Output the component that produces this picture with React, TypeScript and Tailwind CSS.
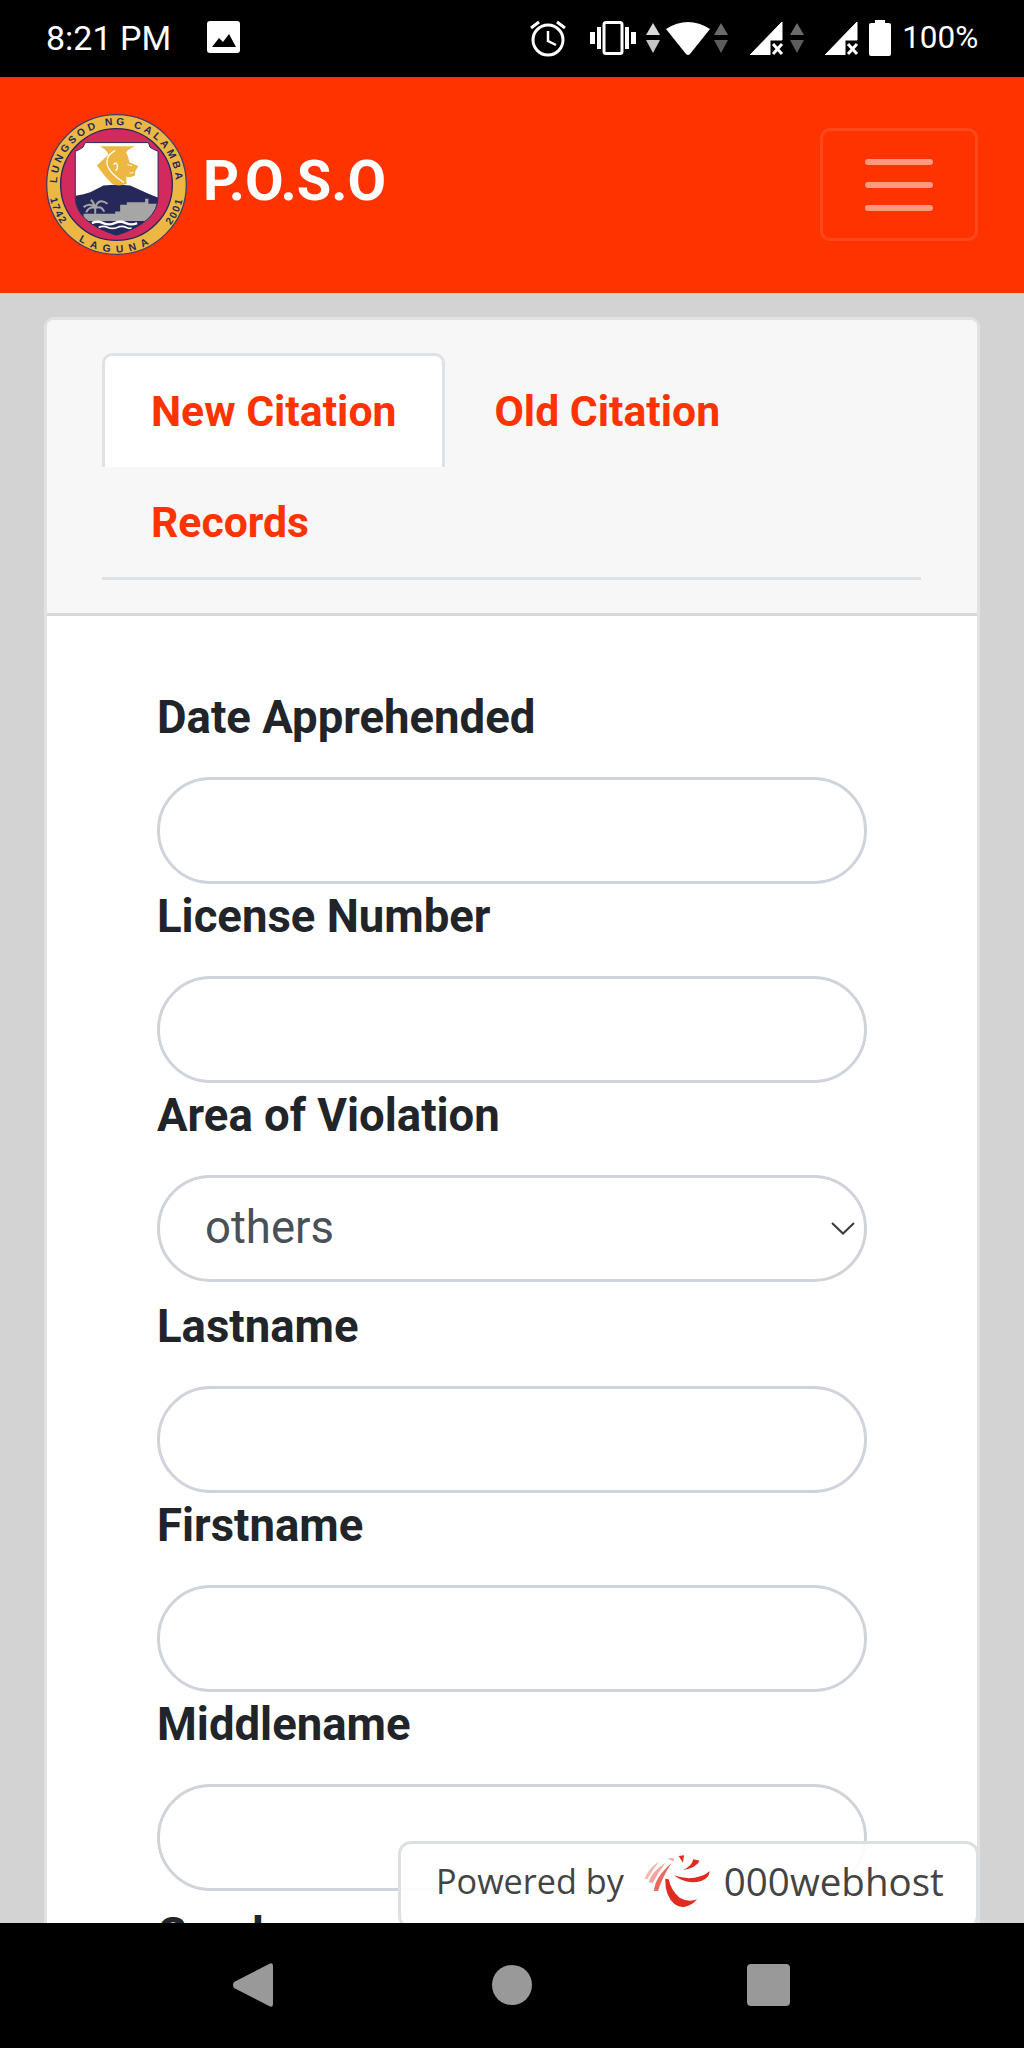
const sans = "font-['Roboto','Liberation_Sans',sans-serif]";

const fields = [
  { label: "Date Apprehended" },
  { label: "License Number" },
  { label: "Area of Violation", select: true },
  { label: "Lastname" },
  { label: "Firstname" },
  { label: "Middlename" },
];

function UpDown({ dim = false }: { dim?: boolean }) {
  return (
    <svg width="14" height="30" viewBox="0 0 14 30" className="shrink-0">
      <path d="M7 0 L14 12 H0 Z" fill={dim ? "#6b6b6b" : "#d9d9d9"} />
      <path d="M0 17 H14 L7 30 Z" fill={dim ? "#5c5c5c" : "#c4c4c4"} />
    </svg>
  );
}

function Signal() {
  return (
    <svg width="34" height="34" viewBox="0 0 34 34" className="shrink-0">
      <path d="M0 34 L32 1 V19 H20 V34 Z" fill="#fff" stroke="#fff" strokeWidth="1" strokeLinejoin="round" />
      <path d="M23 23 L32 33 M32 23 L23 33" stroke="#fff" strokeWidth="3" />
    </svg>
  );
}

function StatusBar() {
  return (
    <div className={`flex h-[77px] shrink-0 items-center bg-black pb-[2px] pl-[46px] text-white ${sans}`}>
      <span className="text-[34px] leading-none">8:21 PM</span>
      <svg width="33" height="33" viewBox="0 0 33 33" className="ml-[36px] shrink-0">
        <rect width="33" height="32" rx="3" fill="#fff" />
        <path d="M5 26 L12 17 L16 21 L22 13 L29 26 Z" fill="#000" />
      </svg>
      <svg width="38" height="38" viewBox="0 0 38 38" className="ml-[289px] shrink-0" fill="none" stroke="#fff">
        <circle cx="19" cy="21" r="15" strokeWidth="3" />
        <path d="M19 12 V22 L27 26" strokeWidth="2.5" />
        <path d="M2 9 L10 3 M36 9 L28 3" strokeWidth="3" />
      </svg>
      <svg width="46" height="34" viewBox="0 0 46 34" className="ml-[23px] shrink-0" fill="#fff">
        <rect x="14" y="1.5" width="18" height="31" rx="2" fill="none" stroke="#fff" strokeWidth="3" />
        <rect x="7" y="6" width="4" height="22" />
        <rect x="0" y="11" width="5" height="12" />
        <rect x="35" y="6" width="4" height="22" />
        <rect x="41" y="11" width="5" height="12" />
      </svg>
      <span className="ml-[10px]"><UpDown /></span>
      <svg width="44" height="34" viewBox="0 0 44 34" className="ml-[6px] shrink-0">
        <path d="M0 8 Q22 -6 44 8 L24 33 Q22 35 20 33 Z" fill="#fff" />
      </svg>
      <span className="ml-[4px]"><UpDown dim /></span>
      <span className="ml-[22px]"><Signal /></span>
      <span className="ml-[6px]"><UpDown dim /></span>
      <span className="ml-[21px]"><Signal /></span>
      <svg width="22" height="36" viewBox="0 0 22 36" className="ml-[10px] shrink-0">
        <path d="M6 0 H16 V3 H20 Q22 3 22 5 V34 Q22 36 20 36 H2 Q0 36 0 34 V5 Q0 3 2 3 H6 Z" fill="#fff" />
      </svg>
      <span className="ml-[11px] text-[31.5px] leading-none">100%</span>
    </div>
  );
}

function CityLogo() {
  const shield = "M165 131 H355 L360 145 Q370 152 384 157 V295 Q384 370 259 410 Q135 370 135 295 V157 Q150 152 158 145 Z";
  const sealFont = "'Liberation Sans',sans-serif";
  return (
    <svg width="143" height="143" viewBox="44 42 430 430" className="shrink-0">
      <defs>
        <path id="sealTop" d="M259 436 A179 179 0 1 1 259 78 A179 179 0 1 1 259 436" />
        <path id="sealBottom" d="M259 53 A204 204 0 1 0 259 461 A204 204 0 1 0 259 53" />
        <clipPath id="shieldClip">
          <path d={shield} />
        </clipPath>
      </defs>
      <circle cx="259" cy="257" r="210" fill="#ecb843" stroke="#3f3f6b" strokeWidth="4" />
      <circle cx="259" cy="257" r="168" fill="#d22a5c" stroke="#26285a" strokeWidth="4" />
      <path d={shield} fill="#fff" />
      <g clipPath="url(#shieldClip)">
        <g transform="translate(120 105)">
          <path d="M0 190 L20 185 Q40 182 60 175 L100 155 Q140 150 180 155 L235 180 L280 198 V320 H0 Z" fill="#26285a" />
          <path d="M40 240 H135 V233 H150 V213 H170 V205 H225 V195 H235 V210 H280 V262 H40 Z" fill="#a6a6a6" />
          <path d="M75 240 V222 M75 222 Q60 205 40 220 M75 222 Q55 218 48 236 M75 222 Q85 190 112 210 M75 222 Q95 215 102 234 M75 222 Q70 205 62 198" stroke="#a6a6a6" strokeWidth="6" fill="none" />
          <path d="M65 268 q17 -8 34 0 t34 0 t34 0 t34 0" stroke="#fff" strokeWidth="7" fill="none" />
          <path d="M85 281 q14 -6 28 0 t28 0 t28 0 t14 0" stroke="#fff" strokeWidth="5" fill="none" />
          <path d="M90 37 H195 Q175 45 168 55 Q176 70 178 85 L205 97 L196 110 L194 125 Q180 133 168 128 L170 150 Q145 160 125 150 L100 122 L80 95 L115 62 Q110 48 90 37 Z" fill="#ecb843" />
          <path d="M135 50 Q110 62 110 85 Q112 115 162 146" stroke="#fff" strokeWidth="4" fill="none" />
          <path d="M130 92 Q140 82 142 98 Q142 108 136 110" stroke="#fff" strokeWidth="4" fill="none" />
          <path d="M172 92 L186 96 M178 118 L190 116" stroke="#fff" strokeWidth="3" fill="none" />
        </g>
      </g>
      <path d={shield} fill="none" stroke="#26285a" strokeWidth="3" />
      <g fill="#26285a" fontFamily={sealFont} fontWeight="700" fontSize="31" textAnchor="middle">
        <text letterSpacing="10">
          <textPath href="#sealTop" startOffset="50%">LUNGSOD NG CALAMBA</textPath>
        </text>
        <text letterSpacing="5">
          <textPath href="#sealBottom" startOffset="31.8%">1742</textPath>
        </text>
        <text letterSpacing="18">
          <textPath href="#sealBottom" startOffset="50%">LAGUNA</textPath>
        </text>
        <text letterSpacing="5">
          <textPath href="#sealBottom" startOffset="68.2%">2001</textPath>
        </text>
      </g>
    </svg>
  );
}

function Navbar() {
  return (
    <div className={`flex h-[216px] shrink-0 items-center bg-[#ff3300] pb-[1px] pl-[45px] pr-[46px] ${sans}`}>
      <CityLogo />
      <span className="mb-[8px] ml-[15px] text-[56px] font-bold leading-none text-white">P.O.S.O</span>
      <button className="ml-auto flex h-[113px] w-[158px] flex-col items-center justify-center gap-[17px] rounded-[10px] border-[3px] border-white/10">
        <span className="h-[6px] w-[68px] rounded-full bg-white/50" />
        <span className="h-[6px] w-[68px] rounded-full bg-white/50" />
        <span className="h-[6px] w-[68px] rounded-full bg-white/50" />
      </button>
    </div>
  );
}

function Tabs() {
  return (
    <div className="border-b-[3px] border-[#d8d8d8] bg-[#f7f7f7] pb-[33px] pl-[55px] pr-[56px] pt-[33px]">
      <div className="flex flex-wrap border-b-[3px] border-[#dee2e6] text-[42.7px] font-bold leading-[54px] text-[#ff3300]">
        <div className="rounded-t-[10px] border-[3px] border-b-0 border-[#dee2e6] bg-white px-[46px] pb-[29px] pt-[28px]">New Citation</div>
        <div className="border-[3px] border-b-0 border-transparent px-[46px] pb-[29px] pt-[28px]">Old Citation</div>
        <div className="w-full px-[49px] pb-[28px] pt-[28px]">Records</div>
      </div>
    </div>
  );
}

function Field({ label, select }: { label: string; select?: boolean }) {
  const box = "h-[107px] w-full rounded-full border-[3px] border-[#ced4da] bg-white";
  return (
    <div className={select ? "mb-[12px]" : ""}>
      <label className="mb-[26px] block text-[45.5px] font-bold leading-[66px] text-[#212529]">{label}</label>
      {select ? (
        <div className="relative">
          <select
            defaultValue="others"
            className={`${box} appearance-none pl-[45px] text-[45.5px] text-[#495057] ${sans}`}
          >
            <option value="others">others</option>
          </select>
          <svg width="24" height="13" viewBox="0 0 24 13" fill="none" className="absolute right-[12px] top-[47px]">
            <path d="M1 1 L12 11.5 L23 1" stroke="#343a40" strokeWidth="2" />
          </svg>
        </div>
      ) : (
        <input readOnly className={`${box} block px-[46px] text-[42px]`} />
      )}
    </div>
  );
}

function HostBadge() {
  return (
    <div className="absolute bottom-[-6px] right-[45px] flex h-[88px] w-[581px] items-center rounded-[13px] border-[3px] border-[#dcdfe3] bg-white/90 pb-[8px] pl-[35px] font-['Open_Sans',sans-serif] leading-none text-[#444]">
      <span className="text-[34.2px]">Powered by</span>
      <svg width="80" height="70" viewBox="0 0 240 210" className="ml-[14px] shrink-0 blur-[0.5px]" fill="#e02b20">
        <path d="M82 98 Q80 150 110 175 Q135 192 165 172 L178 160 Q150 170 125 155 Q100 135 92 100 Z" />
        <path d="M108 88 Q145 118 190 105 Q215 95 215 75 Q200 90 170 95 Q140 100 108 88 Z" />
        <path d="M165 40 L185 44 Q175 65 135 72 Q165 58 165 40 Z" />
        <path d="M122 30 L138 28 L135 50 Z" />
        <path d="M48 135 Q50 95 100 52 Q75 90 60 135 Z" fill="#ea6a5f" />
        <path d="M32 108 Q40 78 82 50 Q60 80 44 112 Z" fill="#f3a49c" />
        <path d="M20 98 Q30 68 64 46 Q44 72 28 100 Z" fill="#f6b8b1" />
        <path d="M88 38 L106 36 L108 46 Z" fill="#f3a49c" />
      </svg>
      <span className="ml-[6px] text-[38.5px]">000webhost</span>
    </div>
  );
}

function BottomNav() {
  return (
    <div className="flex h-[125px] shrink-0 items-center bg-black pb-[1px] pl-[232px]">
      <svg width="41" height="44" viewBox="0 0 41 44" className="shrink-0">
        <path d="M41 3 V41 Q41 45 37 43 L2 25 Q0 22 2 19 L37 1 Q41 -1 41 3 Z" fill="#999" />
      </svg>
      <span className="ml-[219px] h-[40px] w-[40px] rounded-full bg-[#999]" />
      <span className="ml-[215px] h-[42px] w-[43px] rounded-[4px] bg-[#999]" />
    </div>
  );
}

export default function App() {
  return (
    <div className={`flex h-[2048px] w-[1024px] flex-col overflow-hidden bg-[#d3d3d3] ${sans}`}>
      <StatusBar />
      <Navbar />
      <main className="relative min-h-0 flex-1 overflow-hidden px-[44px] pt-[24px]">
        <div className="overflow-hidden rounded-[10px] border-[3px] border-[#e2e2e2] bg-white">
          <Tabs />
          <form className="px-[110px] pt-[69px]">
            {fields.map((f) => (
              <Field key={f.label} label={f.label} select={f.select} />
            ))}
            <label className="mt-[11px] block text-[45.5px] font-bold leading-[66px] text-[#212529]">Gender</label>
          </form>
        </div>
        <HostBadge />
      </main>
      <BottomNav />
    </div>
  );
}
